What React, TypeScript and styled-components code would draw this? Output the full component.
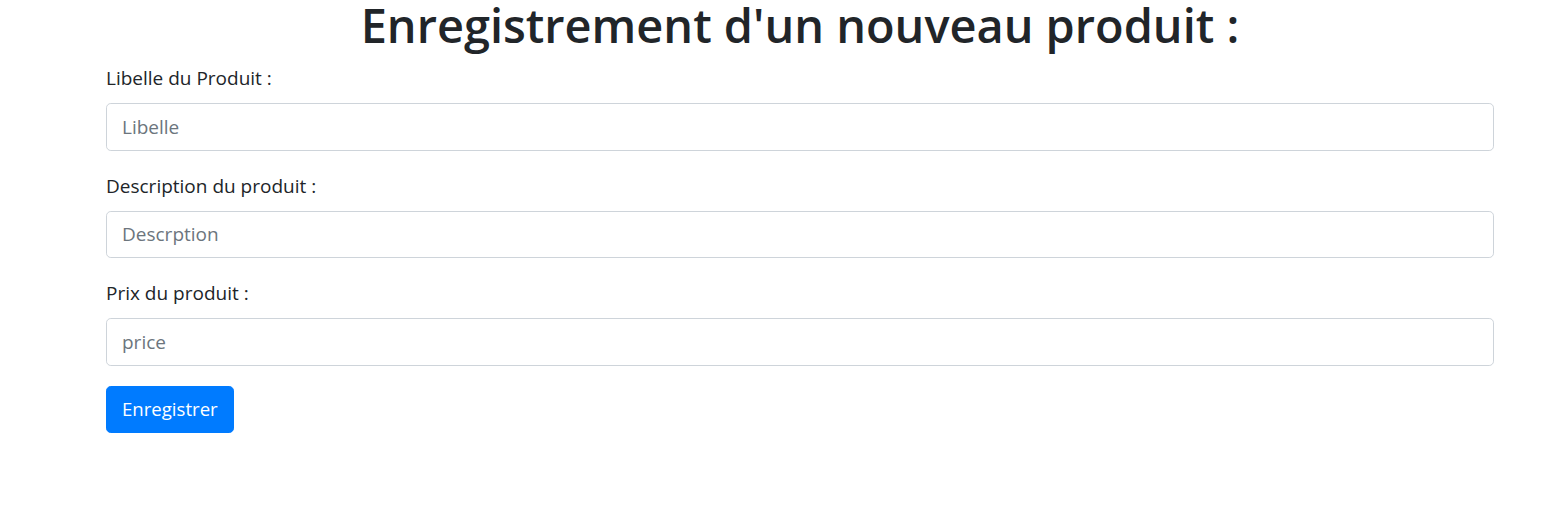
import React from "react";
import styled, { createGlobalStyle } from "styled-components";

const Global = createGlobalStyle`
  * { box-sizing: border-box; }
  body {
    margin: 0;
    background: #fff;
    font-family: "Open Sans", "Noto Sans", sans-serif;
    color: #212529;
  }
`;

const Page = styled.div`
  width: 1388px;
  margin-left: 106px;
`;

const Title = styled.h1`
  margin: 0 0 13px 0;
  font-size: 46.9px;
  font-weight: 600;
  line-height: 50px;
  text-align: center;
  color: #212529;
`;

const Form = styled.form`
  display: flex;
  flex-direction: column;
`;

const Group = styled.div`
  display: flex;
  flex-direction: column;
  margin-bottom: 20px;
`;

const Label = styled.label`
  font-size: 19px;
  line-height: 30px;
  margin-bottom: 10px;
  color: #212529;
`;

const Input = styled.input`
  display: block;
  width: 100%;
  height: 47.5px;
  padding: 7px 15px;
  font-family: inherit;
  font-size: 19px;
  line-height: 1.5;
  color: #495057;
  background: #fff;
  border: 1px solid #ced4da;
  border-radius: 4.8px;
  outline: none;
  &::placeholder {
    color: #6c757d;
    opacity: 1;
  }
`;

const Button = styled.button`
  align-self: flex-start;
  height: 47.5px;
  padding: 0 15px;
  font-family: inherit;
  font-size: 18.6px;
  line-height: 1.5;
  color: #fff;
  background: #007bff;
  border: 1px solid #007bff;
  border-radius: 4.8px;
  cursor: pointer;
`;

const fields = [
  { label: "Libelle du Produit :", placeholder: "Libelle" },
  { label: "Description du produit :", placeholder: "Descrption" },
  { label: "Prix du produit :", placeholder: "price" },
];

export default function App() {
  return (
    <>
      <Global />
      <Page>
        <Title>Enregistrement d'un nouveau produit :</Title>
        <Form onSubmit={(e) => e.preventDefault()}>
          {fields.map((f) => (
            <Group key={f.placeholder}>
              <Label>{f.label}</Label>
              <Input placeholder={f.placeholder} />
            </Group>
          ))}
          <Button type="submit">Enregistrer</Button>
        </Form>
      </Page>
    </>
  );
}
